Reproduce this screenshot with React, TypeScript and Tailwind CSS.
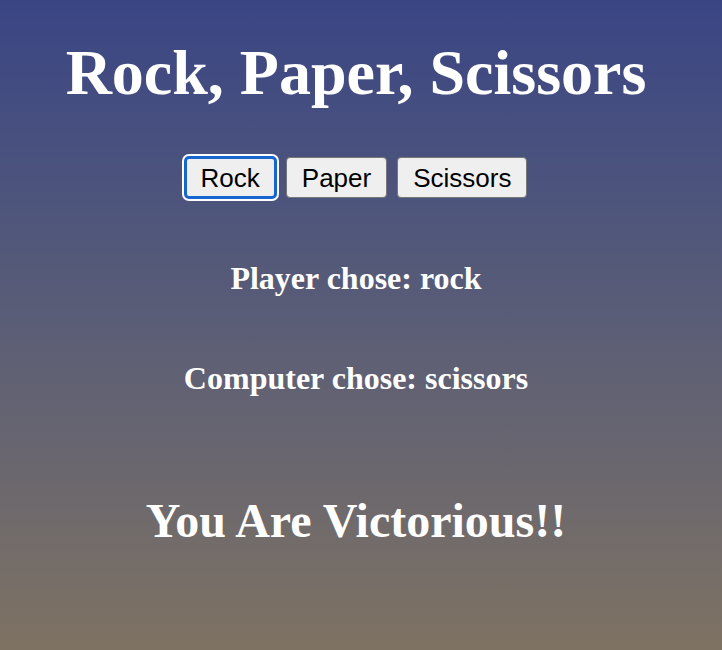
import { useState } from "react";

const choices = ["Rock", "Paper", "Scissors"];

export default function App() {
  const [player] = useState("rock");
  const [computer] = useState("scissors");

  return (
    <div className="min-h-[650px] w-full pr-[10px] bg-gradient-to-b from-[#3a4584] to-[#7e7262] text-center text-white font-['Liberation_Serif',serif]">
      <h1 className="pt-[36px] text-[64px] leading-[74px] font-bold">Rock, Paper, Scissors</h1>
      <div className="mt-[47px] flex justify-center gap-[10px]">
        {choices.map((c, i) => (
          <button
            key={c}
            className={
              i === 0
                ? "h-[41px] px-[14px] rounded-[4px] bg-[#efefef] text-black text-[26px] leading-[30px] font-['Liberation_Sans',Arial,sans-serif] border-2 border-[#1766cf] shadow-[0_0_0_1px_#1766cf,0_0_0_3px_#ffffff]"
                : "h-[41px] px-[15px] rounded-[4px] bg-[#efefef] text-black text-[26px] leading-[30px] font-['Liberation_Sans',Arial,sans-serif] border border-[#767676]"
            }
          >
            {c}
          </button>
        ))}
      </div>
      <h2 className="mt-[60px] text-[32px] leading-[40px] font-bold">Player chose: {player}</h2>
      <h2 className="mt-[60px] text-[32px] leading-[40px] font-bold">Computer chose: {computer}</h2>
      <h1 className="mt-[95px] text-[48px] leading-[56px] font-bold">You Are Victorious!!</h1>
    </div>
  );
}
